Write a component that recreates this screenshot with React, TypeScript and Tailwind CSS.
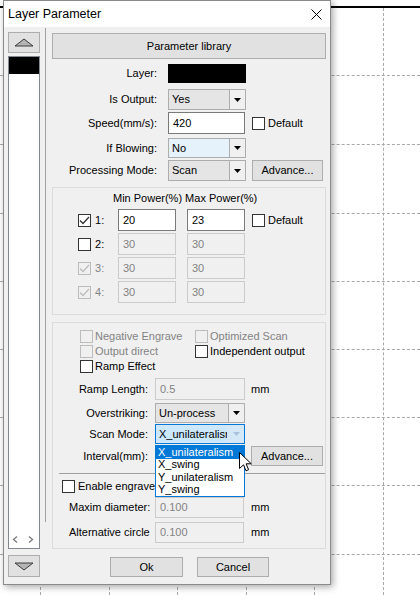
import React from 'react';

// canvas grid behind the dialog
const hLines = ['top-[75px]', 'top-[144px]', 'top-[213px]', 'top-[281px]', 'top-[349px]', 'top-[417px]', 'top-[485px]', 'top-[554px]'];
const vLines = ['left-[40px]', 'left-[109px]', 'left-[177px]', 'left-[246px]', 'left-[314px]', 'left-[383px]'];

const Canvas = () => (
  <div className="absolute inset-0">
    <div className="absolute left-0 right-0 top-[6px] h-[2px] bg-black" />
    {hLines.map(c => (
      <div key={c} className={`absolute left-0 right-0 border-t border-dashed border-[#a9a9a9] ${c}`} />
    ))}
    {vLines.map(c => (
      <div key={c} className={`absolute top-[8px] bottom-0 border-l border-dashed border-[#a9a9a9] ${c}`} />
    ))}
  </div>
);

const Arrow = ({ className = 'fill-black' }: { className?: string }) => (
  <svg width="7" height="4" viewBox="0 0 7 4"><path d="M0 0H7L3.5 4Z" className={className} /></svg>
);

const Btn = ({ children, className = '' }: { children?: React.ReactNode; className?: string }) => (
  <div className={`flex items-center justify-center border border-[#adadad] bg-[#e1e1e1] ${className}`}>{children}</div>
);

const Select = ({ value, blue, className = '' }: { value: string; blue?: boolean; className?: string }) => (
  <div className={`flex h-full border border-[#adadad] bg-[#f0f0f0] ${className}`}>
    <div className={`flex flex-1 items-center pl-[3px] ${blue ? 'bg-[#e5f1fb]' : 'bg-[#e5e5e5]'}`}>{value}</div>
    <div className="flex w-[16px] items-center justify-center border-l border-[#adadad]"><Arrow /></div>
  </div>
);

const Input = ({ value, disabled, className = '' }: { value?: string; disabled?: boolean; className?: string }) => (
  <div
    className={`flex h-full items-center pl-[4px] border ${
      disabled ? 'border-[#cccccc] bg-[#f0f0f0] text-[#838383]' : 'border-[#7a7a7a] bg-white text-black'
    } ${className}`}
  >
    {value}
  </div>
);

const Check = ({ checked, disabled }: { checked?: boolean; disabled?: boolean }) => (
  <div
    className={`flex h-[13px] w-[13px] shrink-0 items-center justify-center border ${
      disabled ? 'border-[#bcbcbc] bg-[#f0f0f0]' : 'border-[#333333] bg-white'
    }`}
  >
    {checked && (
      <svg width="11" height="9" viewBox="0 0 11 9">
        <path d="M1 4.5L4 7.5L10 1" fill="none" stroke={disabled ? '#bcbcbc' : '#333333'} strokeWidth="1.3" />
      </svg>
    )}
  </div>
);

const TopRow = ({ label, className = '', children }: { label: string; className?: string; children: React.ReactNode }) => (
  <div className={`flex items-center ${className}`}>
    <div className="w-[105px] text-right">{label}</div>
    <div className="ml-[11px] flex h-full items-center">{children}</div>
  </div>
);

const PowerRow = ({ n, min, max, checked, disabled, active, first }: {
  n: number; min: string; max: string; checked?: boolean; disabled?: boolean; active?: boolean; first?: boolean;
}) => (
  <div className={`flex h-[22px] items-center pl-[25px] ${first ? 'mt-[4px]' : 'mt-[2px]'}`}>
    <Check checked={checked} disabled={disabled} />
    <div className={`ml-[4px] w-[23px] ${disabled ? 'text-[#838383]' : ''}`}>{n}:</div>
    <Input value={min} disabled={!active} className="w-[58px]" />
    <Input value={max} disabled={!active} className="ml-[11px] w-[58px]" />
    {active && (
      <div className="ml-[7px] flex items-center">
        <Check />
        <span className="ml-[3px]">Default</span>
      </div>
    )}
  </div>
);

const Field = ({ label, className = '', children, left }: { label: string; className?: string; children: React.ReactNode; left?: boolean }) => (
  <div className={`flex items-center ${className}`}>
    <div className={`w-[95px] whitespace-nowrap ${left ? 'pl-[16px]' : 'text-right'}`}>{label}</div>
    <div className="ml-[7px] flex h-full items-center">{children}</div>
  </div>
);

const Opt = ({ label, checked, disabled, className = '' }: { label: string; checked?: boolean; disabled?: boolean; className?: string }) => (
  <div className={`flex items-center ${className}`}>
    <Check checked={checked} disabled={disabled} />
    <span className={`ml-[2px] ${disabled ? 'text-[#838383]' : ''}`}>{label}</span>
  </div>
);

export default function App() {
  return (
    <div className="relative h-[595px] w-[420px] overflow-hidden bg-white font-['Liberation_Sans',Arial,sans-serif] text-[11px] leading-none text-black">
      <Canvas />

      <div className="relative ml-[3px] flex h-[585px] w-[328px] flex-col border border-[#8a8a8a] bg-[#f0f0f0] shadow-[2px_2px_7px_rgba(0,0,0,0.35)]">
        {/* title bar */}
        <div className="flex h-[26px] items-center justify-between bg-white pl-[4px] pr-[8px] text-[12.5px]">
          <span>Layer Parameter</span>
          <svg width="11" height="11" viewBox="0 0 11 11">
            <path d="M0.5 0.5L10.5 10.5M10.5 0.5L0.5 10.5" stroke="#000" strokeWidth="1" />
          </svg>
        </div>

        <div className="flex flex-1 pl-[4px]">
          {/* layer list */}
          <div className="flex w-[32px] flex-col">
            <Btn className="mt-[5px] h-[21px]">
              <svg width="20" height="9" viewBox="0 0 20 9"><path d="M1 8L10 1L19 8Z" fill="#b4b4b4" stroke="#3c3c3c" strokeWidth="1" /></svg>
            </Btn>
            <div className="mt-[3px] flex h-[493px] flex-col border border-[#828790] bg-white">
              <div className="h-[17px] bg-black" />
              <div className="flex-1" />
              <div className="flex gap-[10px] pb-[5px] pl-[3px]">
                <svg width="6" height="7" viewBox="0 0 6 7"><path d="M5 0.5L1.5 3.5L5 6.5" fill="none" stroke="#7a7a7a" strokeWidth="1.3" /></svg>
                <svg width="6" height="7" viewBox="0 0 6 7"><path d="M1 0.5L4.5 3.5L1 6.5" fill="none" stroke="#7a7a7a" strokeWidth="1.3" /></svg>
              </div>
            </div>
            <Btn className="mt-[6px] h-[22px]">
              <svg width="20" height="9" viewBox="0 0 20 9"><path d="M1 1L10 8L19 1Z" fill="#b4b4b4" stroke="#3c3c3c" strokeWidth="1" /></svg>
            </Btn>
          </div>

          <div className="ml-[5px] mt-[1px] h-[494px] w-px bg-[#a0a0a0]" />

          {/* parameters */}
          <div className="ml-[6px] flex w-[274px] flex-col">
            <Btn className="mt-[6px] h-[26px]">Parameter library</Btn>

            <TopRow label="Layer:" className="mt-[5px] h-[19px]">
              <div className="h-full w-[78px] bg-black" />
            </TopRow>
            <TopRow label="Is Output:" className="mt-[6px] h-[21px]">
              <Select value="Yes" className="w-[78px]" />
            </TopRow>
            <TopRow label="Speed(mm/s):" className="mt-[2px] h-[22px]">
              <Input value="420" className="w-[77px]" />
              <div className="ml-[7px] flex items-center">
                <Check />
                <span className="ml-[3px]">Default</span>
              </div>
            </TopRow>
            <TopRow label="If Blowing:" className="mt-[4px] h-[20px]">
              <Select value="No" blue className="w-[78px]" />
            </TopRow>
            <TopRow label="Processing Mode:" className="mt-[2px] h-[21px]">
              <Select value="Scan" className="w-[78px]" />
              <Btn className="ml-[6px] h-full w-[71px]">Advance...</Btn>
            </TopRow>

            {/* power group */}
            <div className="mt-[6px] flex h-[128px] flex-col border border-[#dcdcdc]">
              <div className="mt-[3px] flex h-[14px] items-center pl-[60px]">Min Power(%) Max Power(%)</div>
              <PowerRow n={1} min="20" max="23" checked active first />
              <PowerRow n={2} min="30" max="30" />
              <PowerRow n={3} min="30" max="30" checked disabled />
              <PowerRow n={4} min="30" max="30" checked disabled />
            </div>

            {/* scan group */}
            <div className="mt-[7px] flex h-[227px] flex-col border border-[#dcdcdc]">
              <div className="mt-[6px] flex h-[14px] items-center pl-[27px]">
                <Opt label="Negative Engrave" disabled className="w-[115px]" />
                <Opt label="Optimized Scan" disabled />
              </div>
              <div className="mt-[1px] flex h-[14px] items-center pl-[27px]">
                <Opt label="Output direct" disabled className="w-[115px]" />
                <Opt label="Independent output" />
              </div>
              <div className="mt-[1px] flex h-[14px] items-center pl-[27px]">
                <Opt label="Ramp Effect" />
              </div>

              <Field label="Ramp Length:" className="mt-[5px] h-[22px]">
                <Input value="0.5" disabled className="w-[90px]" />
                <span className="ml-[6px]">mm</span>
              </Field>
              <Field label="Overstriking:" className="mt-[3px] h-[20px]">
                <Select value="Un-process" className="w-[90px]" />
              </Field>
              <Field label="Scan Mode:" className="mt-[1px] h-[20px]">
                <div className="relative flex h-full w-[90px] border border-[#0078d7] bg-[#d5e8f8]">
                  <div className="m-[1px] flex flex-1 items-center overflow-hidden whitespace-nowrap bg-[#cce8ff] pl-[2px]">X_unilateralism</div>
                  <div className="flex w-[16px] items-center justify-center"><Arrow className="fill-[#a9c2da]" /></div>

                  <div className="absolute left-[-1px] top-[20px] z-10 flex w-[90px] flex-col border border-[#0078d7] bg-white">
                    <div className="flex h-[12.5px] items-center bg-[#0078d7] pl-[2px] text-white">X_unilateralism</div>
                    <div className="flex h-[12.5px] items-center pl-[2px]">X_swing</div>
                    <div className="flex h-[12.5px] items-center pl-[2px]">Y_unilateralism</div>
                    <div className="flex h-[12.5px] items-center pl-[2px]">Y_swing</div>
                  </div>

                  <svg className="absolute left-[83px] top-[27px] z-20" width="13" height="20" viewBox="0 0 13 20">
                    <path d="M0.5 0.5V16.5L4.5 12.8L7 18.8L9.6 17.7L7.1 11.8H12.3Z" fill="#fff" stroke="#000" strokeWidth="1" strokeLinejoin="round" />
                  </svg>
                </div>
              </Field>
              <Field label="Interval(mm):" className="mt-[2px] h-[20px]">
                <Input value="" className="w-[90px]" />
                <Btn className="ml-[6px] h-full w-[72px]">Advance...</Btn>
              </Field>

              <div className="ml-[6px] mt-[7px] border-t border-[#a0a0a0]" />

              <div className="mt-[6px] flex h-[13px] items-center pl-[9px]">
                <Check />
                <span className="ml-[3px]">Enable engrave</span>
              </div>
              <Field label="Maxim diameter:" left className="mt-[4px] h-[21px]">
                <Input value="0.100" disabled className="w-[89px]" />
                <span className="ml-[7px]">mm</span>
              </Field>
              <Field label="Alternative circle" left className="mt-[4px] h-[21px]">
                <Input value="0.100" disabled className="w-[89px]" />
                <span className="ml-[7px]">mm</span>
              </Field>
            </div>

            <div className="mt-[8px] flex h-[20px] pl-[58px]">
              <Btn className="h-full w-[73px]">Ok</Btn>
              <Btn className="ml-[14px] h-full w-[72px]">Cancel</Btn>
            </div>
          </div>
        </div>
      </div>
    </div>
  );
}
